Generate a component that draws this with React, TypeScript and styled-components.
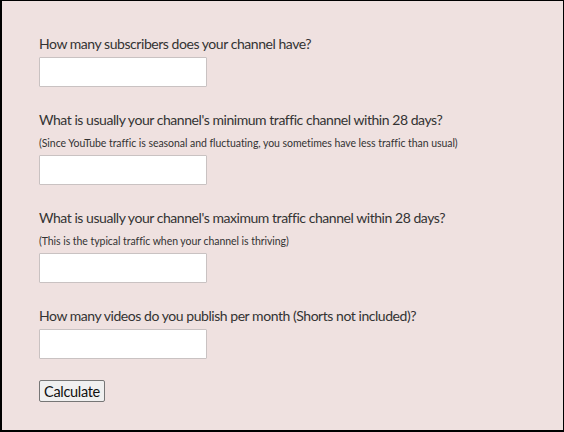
import React from "react";
import styled, { createGlobalStyle } from "styled-components";

const Global = createGlobalStyle`
  html, body { margin: 0; padding: 0; }
  body { font-family: "Lato", "Noto Sans", sans-serif; }
`;

const Frame = styled.div`
  box-sizing: border-box;
  width: 564px;
  height: 432px;
  background: #efe1e0;
  border-style: solid;
  border-color: #000;
  border-width: 1px 1px 2px 2px;
  padding: 34px 0 0 37px;
  color: #333;
`;

const Form = styled.form`
  display: flex;
  flex-direction: column;
  align-items: flex-start;
`;

const Field = styled.div<{ $gap?: number }>`
  display: flex;
  flex-direction: column;
  align-items: flex-start;
  margin-bottom: ${(p) => p.$gap ?? 24}px;
`;

const Label = styled.label`
  font-size: 14px;
  line-height: 18px;
  letter-spacing: -0.45px;
  color: #333;
  margin-bottom: 4px;
`;

const Hint = styled.div`
  font-size: 10.5px;
  line-height: 14px;
  letter-spacing: -0.05px;
  color: #333;
  margin-top: 3px;
  margin-bottom: 5px;
`;

const Input = styled.input`
  box-sizing: border-box;
  width: 168px;
  height: 30px;
  border: 1px solid #c9c2c2;
  background: #fff;
  padding: 4px;
  font-size: 14px;
  border-radius: 1px;
`;

const Button = styled.button`
  box-sizing: border-box;
  height: 22px;
  padding: 0 4px;
  font-family: "Lato", sans-serif;
  font-size: 14.5px;
  letter-spacing: -0.3px;
  color: #111;
  background: #f0f0f0;
  border: 1px solid #767676;
  border-radius: 2px;
`;

const questions = [
  { label: "How many subscribers does your channel have?" },
  {
    label: "What is usually your channel's minimum traffic channel within 28 days?",
    hint: "(Since YouTube traffic is seasonal and fluctuating, you sometimes have less traffic than usual)",
  },
  {
    label: "What is usually your channel's maximum traffic channel within 28 days?",
    hint: "(This is the typical traffic when your channel is thriving)",
  },
  { label: "How many videos do you publish per month (Shorts not included)?" },
];

export default function App() {
  return (
    <>
      <Global />
      <Frame>
        <Form onSubmit={(e) => e.preventDefault()}>
          {questions.map((q, i) => (
            <Field key={i} $gap={i === questions.length - 1 ? 21 : 24}>
              <Label>{q.label}</Label>
              {q.hint && <Hint>{q.hint}</Hint>}
              <Input type="text" />
            </Field>
          ))}
          <Button type="submit">Calculate</Button>
        </Form>
      </Frame>
    </>
  );
}
